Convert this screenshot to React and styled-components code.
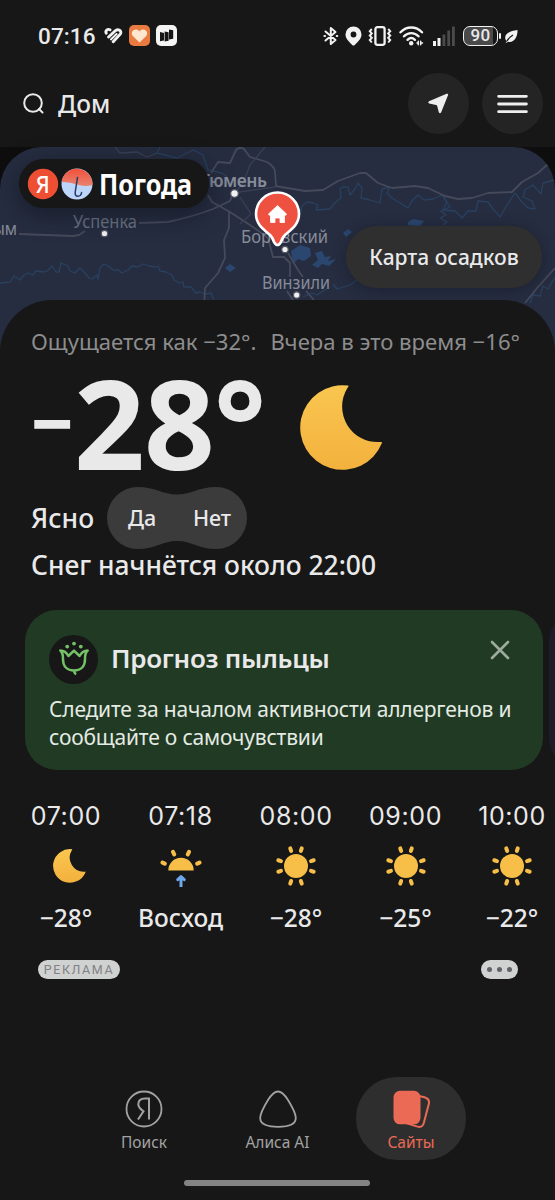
import React from "react";
import styled, { createGlobalStyle } from "styled-components";

const GlobalStyle = createGlobalStyle`
  * {
    box-sizing: border-box;
  }

  body {
    margin: 0;
    background: #171717;
    color: #e9e9ea;
    font-family: "Noto Sans", "Open Sans", sans-serif;
  }

  button {
    border: 0;
    padding: 0;
    color: inherit;
    font-family: inherit;
  }

  svg {
    display: block;
    flex: none;
  }
`;

const Page = styled.div`
  display: flex;
  flex-direction: column;
  width: 555px;
  height: 1200px;
  overflow: hidden;
  background: #171717;
`;

/* status bar */
const StatusBar = styled.div`
  display: flex;
  align-items: center;
  height: 71px;
  padding: 0 37px 0 38px;
`;

const Clock = styled.span`
  width: 66px;
  font-family: Roboto, sans-serif;
  font-size: 22.5px;
  font-weight: 500;
  letter-spacing: 0.1px;
  white-space: nowrap;
`;

const AppIcons = styled.div`
  display: flex;
  align-items: center;
  gap: 6px;
`;

const SystemIcons = styled.div`
  display: flex;
  align-items: center;
  gap: 6.4px;
  margin-left: auto;
`;

const BatteryGroup = styled.div`
  display: flex;
  align-items: center;
  margin-left: 1.5px;
`;

const Battery = styled.div`
  display: flex;
  align-items: center;
  justify-content: center;
  width: 35px;
  height: 20px;
  border: 1.6px solid #f2f2f2;
  border-radius: 7px;
  background: linear-gradient(90deg, #4a4a4a 88%, #171717 88%);
  font-family: Roboto, sans-serif;
  font-size: 17px;
  font-weight: 500;
  letter-spacing: 0.3px;
  line-height: 1;
`;

/* search row */
const SearchRow = styled.header`
  display: flex;
  align-items: center;
  height: 76px;
  padding: 0 12px 11px 23px;
`;

const Place = styled.span`
  flex: 1;
  margin-left: 14px;
  font-size: 24.5px;
  font-weight: 500;
`;

const RoundButton = styled.button`
  display: flex;
  align-items: center;
  justify-content: center;
  width: 61px;
  height: 61px;
  margin-left: 13px;
  border-radius: 50%;
  background: #242424;
`;

/* map */
const MapBox = styled.section`
  position: relative;
  flex: none;
  height: 203px;
  background: #0e0e0e;
`;

const MapCanvas = styled.svg`
  border-radius: 42px 42px 0 0;
  background: #262d40;
`;

const Brand = styled.div`
  position: absolute;
  top: 12px;
  left: 19px;
  display: flex;
  align-items: center;
  width: 190px;
  height: 49px;
  padding-left: 9px;
  border-radius: 25px;
  background: #171717;
  box-shadow: 0 6px 24px rgba(10, 14, 24, 0.55);
`;

const BrandName = styled.span`
  margin-left: 6px;
  color: #ffffff;
  font-size: 29px;
  font-weight: 700;
  line-height: 49px;
  transform: scaleX(0.87);
  transform-origin: left center;
`;

const RainMapButton = styled.button`
  position: absolute;
  top: 79px;
  right: 13px;
  width: 196px;
  height: 62px;
  padding-bottom: 1px;
  border-radius: 31px;
  background: #2f2f30;
  box-shadow: 0 2px 14px rgba(16, 20, 32, 0.45);
  font-size: 21px;
  font-weight: 500;
  white-space: nowrap;
`;

/* current weather */
const Panel = styled.main`
  position: relative;
  display: flex;
  flex: 1;
  flex-direction: column;
  margin-top: -50px;
  padding-top: 22px;
  border-radius: 52px 52px 0 0;
  background: #171717;
`;

const FeelsLike = styled.div`
  display: flex;
  justify-content: space-between;
  padding: 0 35px 0 31px;
  color: #8d8d8e;
  font-size: 22.1px;
  line-height: 38px;
  white-space: nowrap;
`;

const NowRow = styled.div`
  display: flex;
  align-items: center;
  height: 116px;
  margin-top: 4px;
  padding-left: 31px;

  svg {
    margin-top: 11px;
  }
`;

const NowMinus = styled.span`
  width: 43px;
  font-size: 73px;
  font-weight: 800;
  line-height: 116px;
`;

const NowValue = styled.span`
  width: 226px;
  font-size: 124px;
  font-weight: 700;
  letter-spacing: -1px;
  line-height: 116px;
`;

const ConditionRow = styled.div`
  display: flex;
  align-items: center;
  height: 62px;
  margin-top: 7px;
  padding-left: 31px;
`;

const Condition = styled.span`
  width: 76px;
  padding-bottom: 1px;
  font-size: 26.5px;
  font-weight: 500;
`;

const Vote = styled.div`
  position: relative;
  display: flex;
  width: 140px;
  height: 62px;
`;

const VoteShape = styled.svg`
  position: absolute;
  inset: 0;
`;

const VoteButton = styled.button`
  position: relative;
  width: 70px;
  padding-bottom: 2px;
  background: none;
  font-size: 21.5px;
  font-weight: 500;
`;

const SnowNote = styled.p`
  margin: 0;
  padding-left: 31px;
  font-size: 26.4px;
  font-weight: 500;
  line-height: 32px;
  white-space: nowrap;
`;

/* cards */
const CardRow = styled.div`
  display: flex;
  flex: none;
  gap: 6px;
  height: 160px;
  margin-top: 29px;
  padding-left: 25px;
  overflow: hidden;
`;

const Card = styled.article`
  flex: none;
  width: 518px;
  padding: 24px 24px 0;
  border-radius: 32px;
  background: ${(props) => props.$color};
`;

const CardHead = styled.div`
  display: flex;
  align-items: center;
  height: 50px;
`;

const CardTitle = styled.h2`
  flex: 1;
  margin: 0 0 2px 13px;
  font-size: 26px;
  font-weight: 600;
  letter-spacing: -0.28px;
`;

const CloseButton = styled.button`
  align-self: flex-start;
  margin: 6px 9px 0 0;
  background: none;
`;

const CardText = styled.p`
  margin: 11px 0 0;
  color: #e4ebe3;
  font-size: 21px;
  letter-spacing: -0.19px;
  line-height: 28px;
  white-space: nowrap;
`;

/* hourly forecast */
const Hours = styled.div`
  display: flex;
  gap: 37.5px;
  margin-top: 31px;
  padding-left: 31px;
`;

const Hour = styled.div`
  display: flex;
  flex: none;
  flex-direction: column;
  align-items: center;
  width: ${(props) => props.$width}px;
`;

const HourTime = styled.span`
  font-family: Inter, sans-serif;
  font-size: 25px;
  letter-spacing: 0.6px;
  line-height: 30px;
  white-space: nowrap;
`;

const HourIcon = styled.div`
  display: flex;
  align-items: center;
  justify-content: center;
  height: 72px;
  padding-bottom: 2px;
`;

const MoonSlot = styled.span`
  padding-left: 6px;
`;

const HourTemp = styled.span`
  font-size: 24.5px;
  font-weight: 500;
  line-height: 30px;
  white-space: nowrap;
`;

const AdRow = styled.div`
  display: flex;
  justify-content: space-between;
  margin-top: 27px;
  padding: 0 37px 0 38px;
`;

const AdPill = styled.span`
  display: flex;
  align-items: center;
  justify-content: center;
  gap: 5px;
  width: ${(props) => props.$width}px;
  height: 19px;
  border-radius: 10px;
  background: #d0d1d1;
  color: #808284;
  font-family: Roboto, sans-serif;
  font-size: 12.5px;
  letter-spacing: 1.6px;
`;

const AdDot = styled.i`
  width: 5px;
  height: 5px;
  border-radius: 50%;
  background: #5f6266;
`;

/* bottom navigation */
const BottomNav = styled.nav`
  display: flex;
  justify-content: center;
  gap: 23px;
  margin-top: auto;
`;

const NavItem = styled.a`
  display: flex;
  flex-direction: column;
  align-items: center;
  width: 110.5px;
  height: 83px;
  padding-top: 13px;
  border-radius: 41px;
  background: ${(props) => (props.$active ? "#2e2e2e" : "transparent")};
  color: ${(props) => (props.$active ? "#ea6a55" : "#a2a2a2")};
  font-size: 15.5px;
  line-height: 24px;

  svg {
    margin-bottom: 2px;
  }
`;

const HomeBar = styled.div`
  width: 186px;
  height: 6px;
  margin: 20px auto 14px 184px;
  border-radius: 3px;
  background: #838383;
`;

const hours = [
  { time: "07:00", icon: "moon", value: "−28°", width: 70 },
  { time: "07:18", icon: "rise", value: "Восход", width: 84 },
  { time: "08:00", icon: "sun", value: "−28°", width: 72 },
  { time: "09:00", icon: "sun", value: "−25°", width: 72 },
  { time: "10:00", icon: "sun", value: "−22°", width: 66 },
];

const Moon = ({ size }) => (
  <svg width={size} height={(size * 85) / 83} viewBox="0 0 83 85">
    <defs>
      <linearGradient id="moon" x1="0" y1="0" x2="0" y2="1">
        <stop offset="0" stopColor="#f9c650" />
        <stop offset="1" stopColor="#f3b13d" />
      </linearGradient>
    </defs>
    <path d="M48 .6A42.3 42.3 0 1 0 81.8 58.2Q82.6 56.6 80.5 57A35.5 35.5 0 0 1 47.400 3Q49.4 .7 48 .6Z" fill="url(#moon)" />
  </svg>
);

const Sun = () => (
  <svg width="42" height="42" viewBox="-21 -21 42 42">
    <circle r="12" fill="#f7be48" />
    {[18, 72, 108, 162, 198, 252, 288, 342].map((angle) => (
      <path key={angle} d="M15.8 0H18.6" stroke="#f7be48" strokeWidth="4" strokeLinecap="round" transform={`rotate(${angle})`} />
    ))}
  </svg>
);

const Sunrise = () => (
  <svg width="42" height="42" viewBox="-21 -21 42 42">
    <path d="M-12.7 4.5A12.7 12.7 0 0 1 12.7 4.5Z" fill="#f7be48" />
    <path d="M-18.5-3.4L-16.2-2.4M18.5-3.4L16.2-2.4M-8-14.1L-6.8-11.6M8-14.1L6.8-11.6" stroke="#f7be48" strokeWidth="4" strokeLinecap="round" />
    <path d="M0 20.5V12M-3.2 13.6L0 10.6L3.2 13.6" fill="none" stroke="#6ea8ea" strokeWidth="3" strokeLinecap="round" strokeLinejoin="round" />
  </svg>
);

const hourIcons = {
  moon: (
    <MoonSlot>
      <Moon size={33} />
    </MoonSlot>
  ),
  rise: <Sunrise />,
  sun: <Sun />,
};

const HealthIcon = () => (
  <svg width="19" height="18" viewBox="0 0 19 18" fill="none" stroke="#f2f2f2" strokeWidth="2.9" strokeLinecap="round">
    <path d="M2.2 6.2C1 3.6 3.6 1.6 6 2.8" />
    <path d="M4.600 10L11 4C14 1 18.500 4 16.200 7.200L9.200 14.800" />
    <path d="M6.900 12.400L12.600 7" strokeWidth="2" />
  </svg>
);

const HeartAppIcon = () => (
  <svg width="21" height="21" viewBox="0 0 21 21">
    <rect width="21" height="21" rx="5" fill="#ea7b40" />
    <path d="M10.5 17.5L3.800 11C.5 6.500 6.500 1.800 10.500 6.200C14.500 1.800 20.500 6.500 17.200 11Z" fill="#ffe6cf" />
  </svg>
);

const TilesAppIcon = () => (
  <svg width="21" height="21" viewBox="0 0 21 21">
    <rect width="21" height="21" rx="5" fill="#f4f4f4" />
    <path d="M4 7L8 8V15.500L4 16.300ZM8.600 6.500L12.600 7.300V15.800L8.600 16.600ZM13 4.500L17.200 5.300V13.800L13 14.600Z" fill="#151515" />
  </svg>
);

const BluetoothIcon = () => (
  <svg width="16" height="20" viewBox="0 0 16 20" fill="none" stroke="#f2f2f2" strokeWidth="2" strokeLinejoin="round" strokeLinecap="round">
    <path d="M2.5 5.500L12.500 14L7.800 18V2L12.500 6L2.500 14.500" />
    <path d="M1.500 10H2M13.800 10H14.200" strokeWidth="2.200" />
  </svg>
);

const PlaceIcon = () => (
  <svg width="17" height="20" viewBox="0 0 17 20">
    <path
      fillRule="evenodd"
      d="M8.500 .5A8 8 0 0 1 16.500 8.500C16.500 13 12 16.500 9.800 18.900Q8.500 20.200 7.200 18.900C5 16.500 .5 13 .5 8.500A8 8 0 0 1 8.500 .5ZM8.500 5.600A2.900 2.900 0 1 0 8.500 11.400A2.900 2.900 0 1 0 8.500 5.600Z"
      fill="#f2f2f2"
    />
  </svg>
);

const VibrateIcon = () => (
  <svg width="24" height="20" viewBox="0 0 24 20" fill="none" stroke="#f2f2f2">
    <rect x="7.4" y="1.2" width="9.2" height="17.6" rx="2" strokeWidth="2.3" />
    <path
      d="M3.800 3L1.800 5.200L3.800 7.400L1.800 9.600L3.800 11.800L1.800 14L3.800 16.500M20.200 3L22.200 5.200L20.200 7.400L22.200 9.600L20.200 11.800L22.200 14L20.200 16.500"
      strokeWidth="2"
    />
  </svg>
);

const WifiIcon = () => (
  <svg width="26" height="20" viewBox="0 0 26 20" fill="none" stroke="#f2f2f2" strokeLinecap="round">
    <path d="M1.500 6.300C7.500 -.2 17 -.2 23 6.300M5 10.300C9 6 15.500 6 19.500 10.300M8.600 13.800C10.800 11.600 13.700 11.600 15.900 13.800" strokeWidth="2.400" />
    <circle cx="12.200" cy="17.200" r="2.200" fill="#f2f2f2" stroke="none" />
    <path d="M19.300 15.300V18.700M21.700 15.300V18.700M18 17H19M22 17H23.500" strokeWidth="1.500" />
  </svg>
);

const SignalIcon = () => (
  <svg width="24" height="20" viewBox="0 0 24 20">
    <path d="M2 15H5V20H2ZM6.500 12H9.500V20H6.500Z" fill="#f2f2f2" />
    <path d="M11.500 8.500H14.300V20H11.500ZM16.300 4.500H19.100V20H16.300ZM21 .5H23.800V20H21Z" fill="#4b4b4b" />
  </svg>
);

const SaverIcon = () => (
  <svg width="20" height="16" viewBox="0 0 20 16" fill="#f2f2f2">
    <rect x="1" y="5" width="2" height="6" rx="1" />
    <path d="M8.500 13.600C4.500 7.500 10 3 19.500 2C19.800 9.500 15.500 15 10.500 13.700L7.500 15Z" />
    <path d="M8.500 13.500C10.500 10.500 12.500 8.500 15 7" stroke="#171717" strokeWidth="1.200" fill="none" />
  </svg>
);

const RegionMap = () => (
  <MapCanvas width="555" height="203" viewBox="0 0 555 203" fill="none">
    <g stroke="#29405f" strokeWidth="1.3" strokeLinejoin="round">
      <path d="M0 136L10 135L14 129L20 133L24 128L28 126L33 128L36 124L44 125L47 124L52 119L56 125L59 125L61 116L68 119L70 124L75 126L80 121L85 126L89 131L92 132L97 128L98 132L100 121L104 117L110 120L113 123L118 123L122 126L128 123L132 119L138 120L143 117L149 119L155 120L158 119L160 124L166 125L172 128L174 133L180 136L183 135L184 140L191 140L196 146L200 145L205 147L211 146L214 153L212 157" />
      <path d="M300 68L302 59L307 55L313 56L318 58L316 63L330 62L333 58L337 54L341 51L340 42L343 40L348 40L350 48L355 42L358 36L362 41L361 51L370 53L380 56L382 42L390 40L387 46L392 51L400 56L408 61L412 54L418 48L424 53L433 52L442 48L447 55L443 63L455 64L462 71L468 64L476 64L478 54L488 55L493 62L500 70L507 58L515 46L521 54L528 61L535 62L532 54L523 50L525 43L533 38L541 47L543 36L555 33" />
      <path d="M442 48L450 60L441 64L446 68L440 71L447 75L443 78" />
      <path d="M160 0L157 6L177 11L193 3L203 8L208 23L222 26L227 30M333 137L337 142L350 138L357 133M303 150L312 146L317 148L328 141M530 156L533 148L540 149L543 139L548 142L555 130" />
    </g>
    <g fill="#2b466f">
      <path d="M408 75L413 72L424 74L420 79L408 78ZM343 86L348 82L352 85L346 90ZM225 121L230 117L236 121L230 125Z" />
      <path d="M291 104L300 98L310 101L311 109L304 114L298 112L293 117ZM312 118L318 113L315 106L322 104L325 110L331 109L328 114L336 112L329 119L322 117L318 121Z" />
    </g>
    <g stroke="#454a5b" strokeWidth="1.8" strokeLinejoin="round">
      <path d="M19 87L73 89L79 88L85 84M139 76L168 75Q195 69 213 62L230 54L233 46" />
      <path d="M211 26L218 15L230 16L236 3Q240-1 244 2L250 10L267 15Q275 20 275 25L276 39M208 48L212 55L230 65L253 80L268 91L273 110H284L290 116V130M229 65V81L224 93L225 111L218 126L205 141L204 160" />
      <path d="M275 39L305 44L323 43L338 34L360 26H366L378 36L392 41L415 39L428 41L445 49L458 52L472 51L488 46L512 45L522 35L538 26L549 16L555 11" />
      <path d="M288 106L298 123L303 130M287 144L293 153M306 144L314 153M555 121L538 140L525 156" />
    </g>
    <path d="M115 0L120 6L137 5L147 10L157 6M265 0L250 18L243 36L235 46M240 50L251 67L240 77M233 46L275 40M256 60L276 52" stroke="#394055" strokeWidth="1.3" />
    <g fill="#868b99" fontFamily="Noto Sans, sans-serif" fontSize="17.5">
      <text x="200" y="40" textLength="67" fontWeight="600">Тюмень</text>
      <text x="73" y="80.5" textLength="64" lengthAdjust="spacingAndGlyphs" fill="#6c7384">Успенка</text>
      <text x="-27" y="88" textLength="44" lengthAdjust="spacingAndGlyphs">Крым</text>
      <text x="241" y="95.5" textLength="87" lengthAdjust="spacingAndGlyphs">Боровский</text>
      <text x="262" y="141.5" textLength="68" lengthAdjust="spacingAndGlyphs">Винзили</text>
    </g>
    <g fill="#f1f1f1" stroke="#555a66" strokeWidth="1.2">
      <circle cx="234.5" cy="46.5" r="3.8" />
      <circle cx="104.5" cy="86.5" r="3.2" />
      <circle cx="285" cy="102.5" r="3.2" />
      <circle cx="296.7" cy="148" r="3.2" />
    </g>
    <path
      d="M277.500 45.500A21.500 21.500 0 0 1 299 67C299 77 292 82 286 87Q282 90.500 281 95Q277.500 101 274 95Q273 90.500 269 87C263 82 256 77 256 67A21.500 21.500 0 0 1 277.500 45.500Z"
      fill="#ef5140"
      stroke="#fff"
      strokeWidth="2.6"
    />
    <path d="M277.500 58.500L286.500 67Q286.800 68.300 284.500 68.200V75.500H280V71H275V75.500H270.500V68.200Q268.200 68.300 268.500 67Z" fill="#fff" stroke="#fff" strokeWidth=".8" strokeLinejoin="round" />
  </MapCanvas>
);

const BrandIcons = () => (
  <svg width="65" height="32" viewBox="0 0 65 32" overflow="visible">
    <defs>
      <linearGradient id="dome" x1="0" y1="0" x2="0" y2="1">
        <stop offset="0" stopColor="#f0503a" />
        <stop offset="1" stopColor="#e8836f" />
      </linearGradient>
    </defs>
    <circle cx="15" cy="16" r="15.2" fill="#ee4f32" />
    <text x="14.8" y="24.5" textAnchor="middle" fill="#fff" fontFamily="Noto Sans, sans-serif" fontSize="24" fontWeight="500" textLength="14" lengthAdjust="spacingAndGlyphs">
      Я
    </text>
    <circle cx="49" cy="16" r="15.5" fill="#bdd5f8" />
    <path d="M33.500 14A15.600 15.600 0 0 1 64.500 17Q56 19 49 16.500Q41 13.500 33.500 14Z" fill="url(#dome)" />
    <path d="M49.500 9.500L47.300 23.500Q46.500 28.200 50 28.200Q53 28.200 53.600 24.500" fill="none" stroke="#253a63" strokeWidth="1.500" strokeLinecap="round" />
  </svg>
);

const PollenIcon = () => (
  <svg width="49" height="49" viewBox="0 0 49 49" fill="none">
    <circle cx="24.5" cy="24.5" r="24.5" fill="#171717" />
    <path
      d="M11.300 15.600Q14.200 18 14 24.500C14 31 18 35.500 25 35.500C32 35.500 36 31 36 24.500Q35.800 18 38.700 15.600Q33.500 15.800 30.600 21L25 15.600L19.400 21Q16.500 15.800 11.300 15.600ZM24.500 35.500L26.300 38.600"
      stroke="#74c167"
      strokeWidth="2.500"
      strokeLinejoin="round"
      strokeLinecap="round"
    />
    <g fill="#74c167">
      <circle cx="18.2" cy="11.6" r="1.9" />
      <circle cx="25" cy="8.6" r="1.9" />
      <circle cx="31.8" cy="11.6" r="1.9" />
    </g>
  </svg>
);

const App = () => {
  return (
    <>
      <GlobalStyle />
      <Page>
        <StatusBar>
          <Clock>07:16</Clock>
          <AppIcons>
            <HealthIcon />
            <HeartAppIcon />
            <TilesAppIcon />
          </AppIcons>
          <SystemIcons>
            <BluetoothIcon />
            <PlaceIcon />
            <VibrateIcon />
            <WifiIcon />
            <SignalIcon />
            <BatteryGroup>
              <Battery>90</Battery>
              <SaverIcon />
            </BatteryGroup>
          </SystemIcons>
        </StatusBar>

        <SearchRow>
          <svg width="21" height="21" viewBox="0 0 21 21" fill="none" stroke="#e9e9ea" strokeWidth="2" strokeLinecap="round">
            <circle cx="10" cy="10" r="8.8" />
            <path d="M16 16L19.500 19.500" />
          </svg>
          <Place>Дом</Place>
          <RoundButton aria-label="Моё местоположение">
            <svg width="21" height="21" viewBox="0 0 21 21">
              <path d="M18.600 .8Q20.700 .1 20 2.200L13.200 19.300Q12 21.200 10.800 19.300L9.200 13Q9 12.200 8 12L1.200 10.600Q-.6 9.600 1 8.200Z" fill="#eeeeee" />
            </svg>
          </RoundButton>
          <RoundButton aria-label="Меню">
            <svg width="31" height="20" viewBox="0 0 31 20" stroke="#eeeeee" strokeWidth="2.8" strokeLinecap="round">
              <path d="M1.600 2.300H29.400M1.600 10H29.400M1.600 17.700H29.400" />
            </svg>
          </RoundButton>
        </SearchRow>

        <MapBox>
          <RegionMap />
          <Brand>
            <BrandIcons />
            <BrandName>Погода</BrandName>
          </Brand>
          <RainMapButton>Карта осадков</RainMapButton>
        </MapBox>

        <Panel>
          <FeelsLike>
            <span>Ощущается как −32°.</span>
            <span>Вчера в это время −16°</span>
          </FeelsLike>
          <NowRow>
            <NowMinus>−</NowMinus>
            <NowValue>28°</NowValue>
            <Moon size={83} />
          </NowRow>
          <ConditionRow>
            <Condition>Ясно</Condition>
            <Vote>
              <VoteShape width="140" height="62" viewBox="0 0 140 62">
                <path d="M31 0C48 0 56 7.500 70 7.500C84 7.500 92 0 109 0A31 31 0 0 1 109 62C92 62 84 54 70 54C56 54 48 62 31 62A31 31 0 0 1 31 0Z" fill="#3b3b3c" />
              </VoteShape>
              <VoteButton>Да</VoteButton>
              <VoteButton>Нет</VoteButton>
            </Vote>
          </ConditionRow>
          <SnowNote>Снег начнётся около 22:00</SnowNote>

          <CardRow>
            <Card $color="#203a23">
              <CardHead>
                <PollenIcon />
                <CardTitle>Прогноз пыльцы</CardTitle>
                <CloseButton aria-label="Закрыть">
                  <svg width="20" height="20" viewBox="0 0 20 20" stroke="#9dab9d" strokeWidth="2.6" strokeLinecap="round">
                    <path d="M2 2L18 18M18 2L2 18" />
                  </svg>
                </CloseButton>
              </CardHead>
              <CardText>
                Следите за началом активности аллергенов и
                <br />
                сообщайте о самочувствии
              </CardText>
            </Card>
            <Card $color="#1f1c2a" />
          </CardRow>

          <Hours>
            {hours.map((hour) => (
              <Hour key={hour.time} $width={hour.width}>
                <HourTime>{hour.time}</HourTime>
                <HourIcon>{hourIcons[hour.icon]}</HourIcon>
                <HourTemp>{hour.value}</HourTemp>
              </Hour>
            ))}
          </Hours>

          <AdRow>
            <AdPill $width={82}>РЕКЛАМА</AdPill>
            <AdPill $width={37}>
              <AdDot />
              <AdDot />
              <AdDot />
            </AdPill>
          </AdRow>

          <BottomNav>
            <NavItem>
              <svg width="38" height="38" viewBox="0 0 38 38" fill="none" stroke="#a2a2a2">
                <circle cx="19" cy="19" r="17.5" strokeWidth="1.8" />
                <path d="M24 29.500V8.500H20C15.500 8.500 13.300 11 13.300 14.300C13.300 17.500 15 19 18.500 21.300L13 29.500" strokeWidth="2" />
              </svg>
              Поиск
            </NavItem>
            <NavItem>
              <svg width="38" height="38" viewBox="0 0 38 38" fill="none" stroke="#a2a2a2" strokeWidth="1.8">
                <path d="M19 1.500C23 1.500 25.500 4.500 29 10C33 16.500 36.800 23 36.800 28C36.800 35 28 36.800 19 36.800S1.200 35 1.200 28C1.200 23 5 16.500 9 10C12.500 4.500 15 1.500 19 1.500Z" />
              </svg>
              Алиса AI
            </NavItem>
            <NavItem $active>
              <svg width="38" height="38" viewBox="0 0 38 38">
                <path d="M27 6L32.500 7.300Q38 9 36.800 14L31.800 33Q30.300 38 25.500 36.600L14 33" fill="none" stroke="#ea6a55" strokeWidth="2" />
                <rect x="1.5" y="0.8" width="27" height="33.5" rx="6.500" fill="#ea6a55" />
              </svg>
              Сайты
            </NavItem>
          </BottomNav>
          <HomeBar />
        </Panel>
      </Page>
    </>
  );
};

export default App;
